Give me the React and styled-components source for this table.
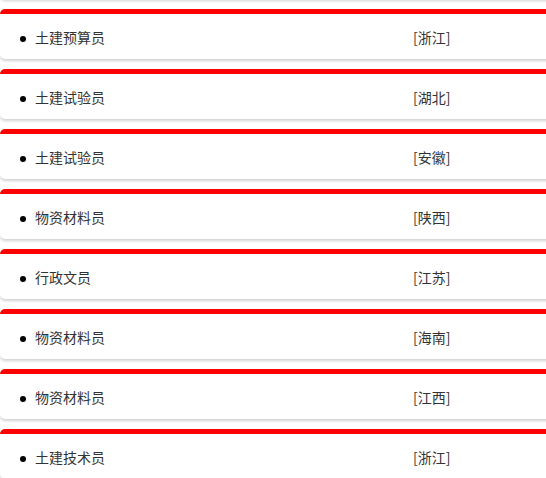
import React from 'react';
import styled, { createGlobalStyle } from 'styled-components';

const GlobalStyle = createGlobalStyle`
  html, body {
    margin: 0;
    padding: 0;
    background: #fff;
    overflow-x: hidden;
  }
  body {
    font-family: "Noto Sans CJK SC", "Liberation Sans", sans-serif;
  }
`

const List = styled.ul`
  margin: -51px 0 0 0;
  padding: 0;
  width: 560px;
  list-style: none;
`

const Card = styled.li`
  display: flex;
  align-items: center;
  height: 45px;
  margin-bottom: 10px;
  border-top: 5px solid #ff0000;
  border-radius: 5px;
  background: #fff;
  box-shadow: 0 2px 3px rgba(0, 0, 0, 0.18);
  font-size: 14px;
  color: #333;

  &::before {
    content: '';
    width: 6px;
    height: 6px;
    margin: 4px 9px 0 20px;
    border-radius: 50%;
    background: #000;
    visibility: ${p => (p.$empty ? 'hidden' : 'visible')};
  }
`

const Name = styled.span`
  width: 378px;
`

const Area = styled.span``

const jobs = [
  { name: '土建预算员', area: '浙江' },
  { name: '土建试验员', area: '湖北' },
  { name: '土建试验员', area: '安徽' },
  { name: '物资材料员', area: '陕西' },
  { name: '行政文员', area: '江苏' },
  { name: '物资材料员', area: '海南' },
  { name: '物资材料员', area: '江西' },
  { name: '土建技术员', area: '浙江' },
]

function App() {
  return (
    <>
      <GlobalStyle />
      <List>
        <Card $empty />
        {jobs.map((job, i) => (
          <Card key={i}>
            <Name>{job.name}</Name>
            <Area>[{job.area}]</Area>
          </Card>
        ))}
      </List>
    </>
  )
}

export default App
